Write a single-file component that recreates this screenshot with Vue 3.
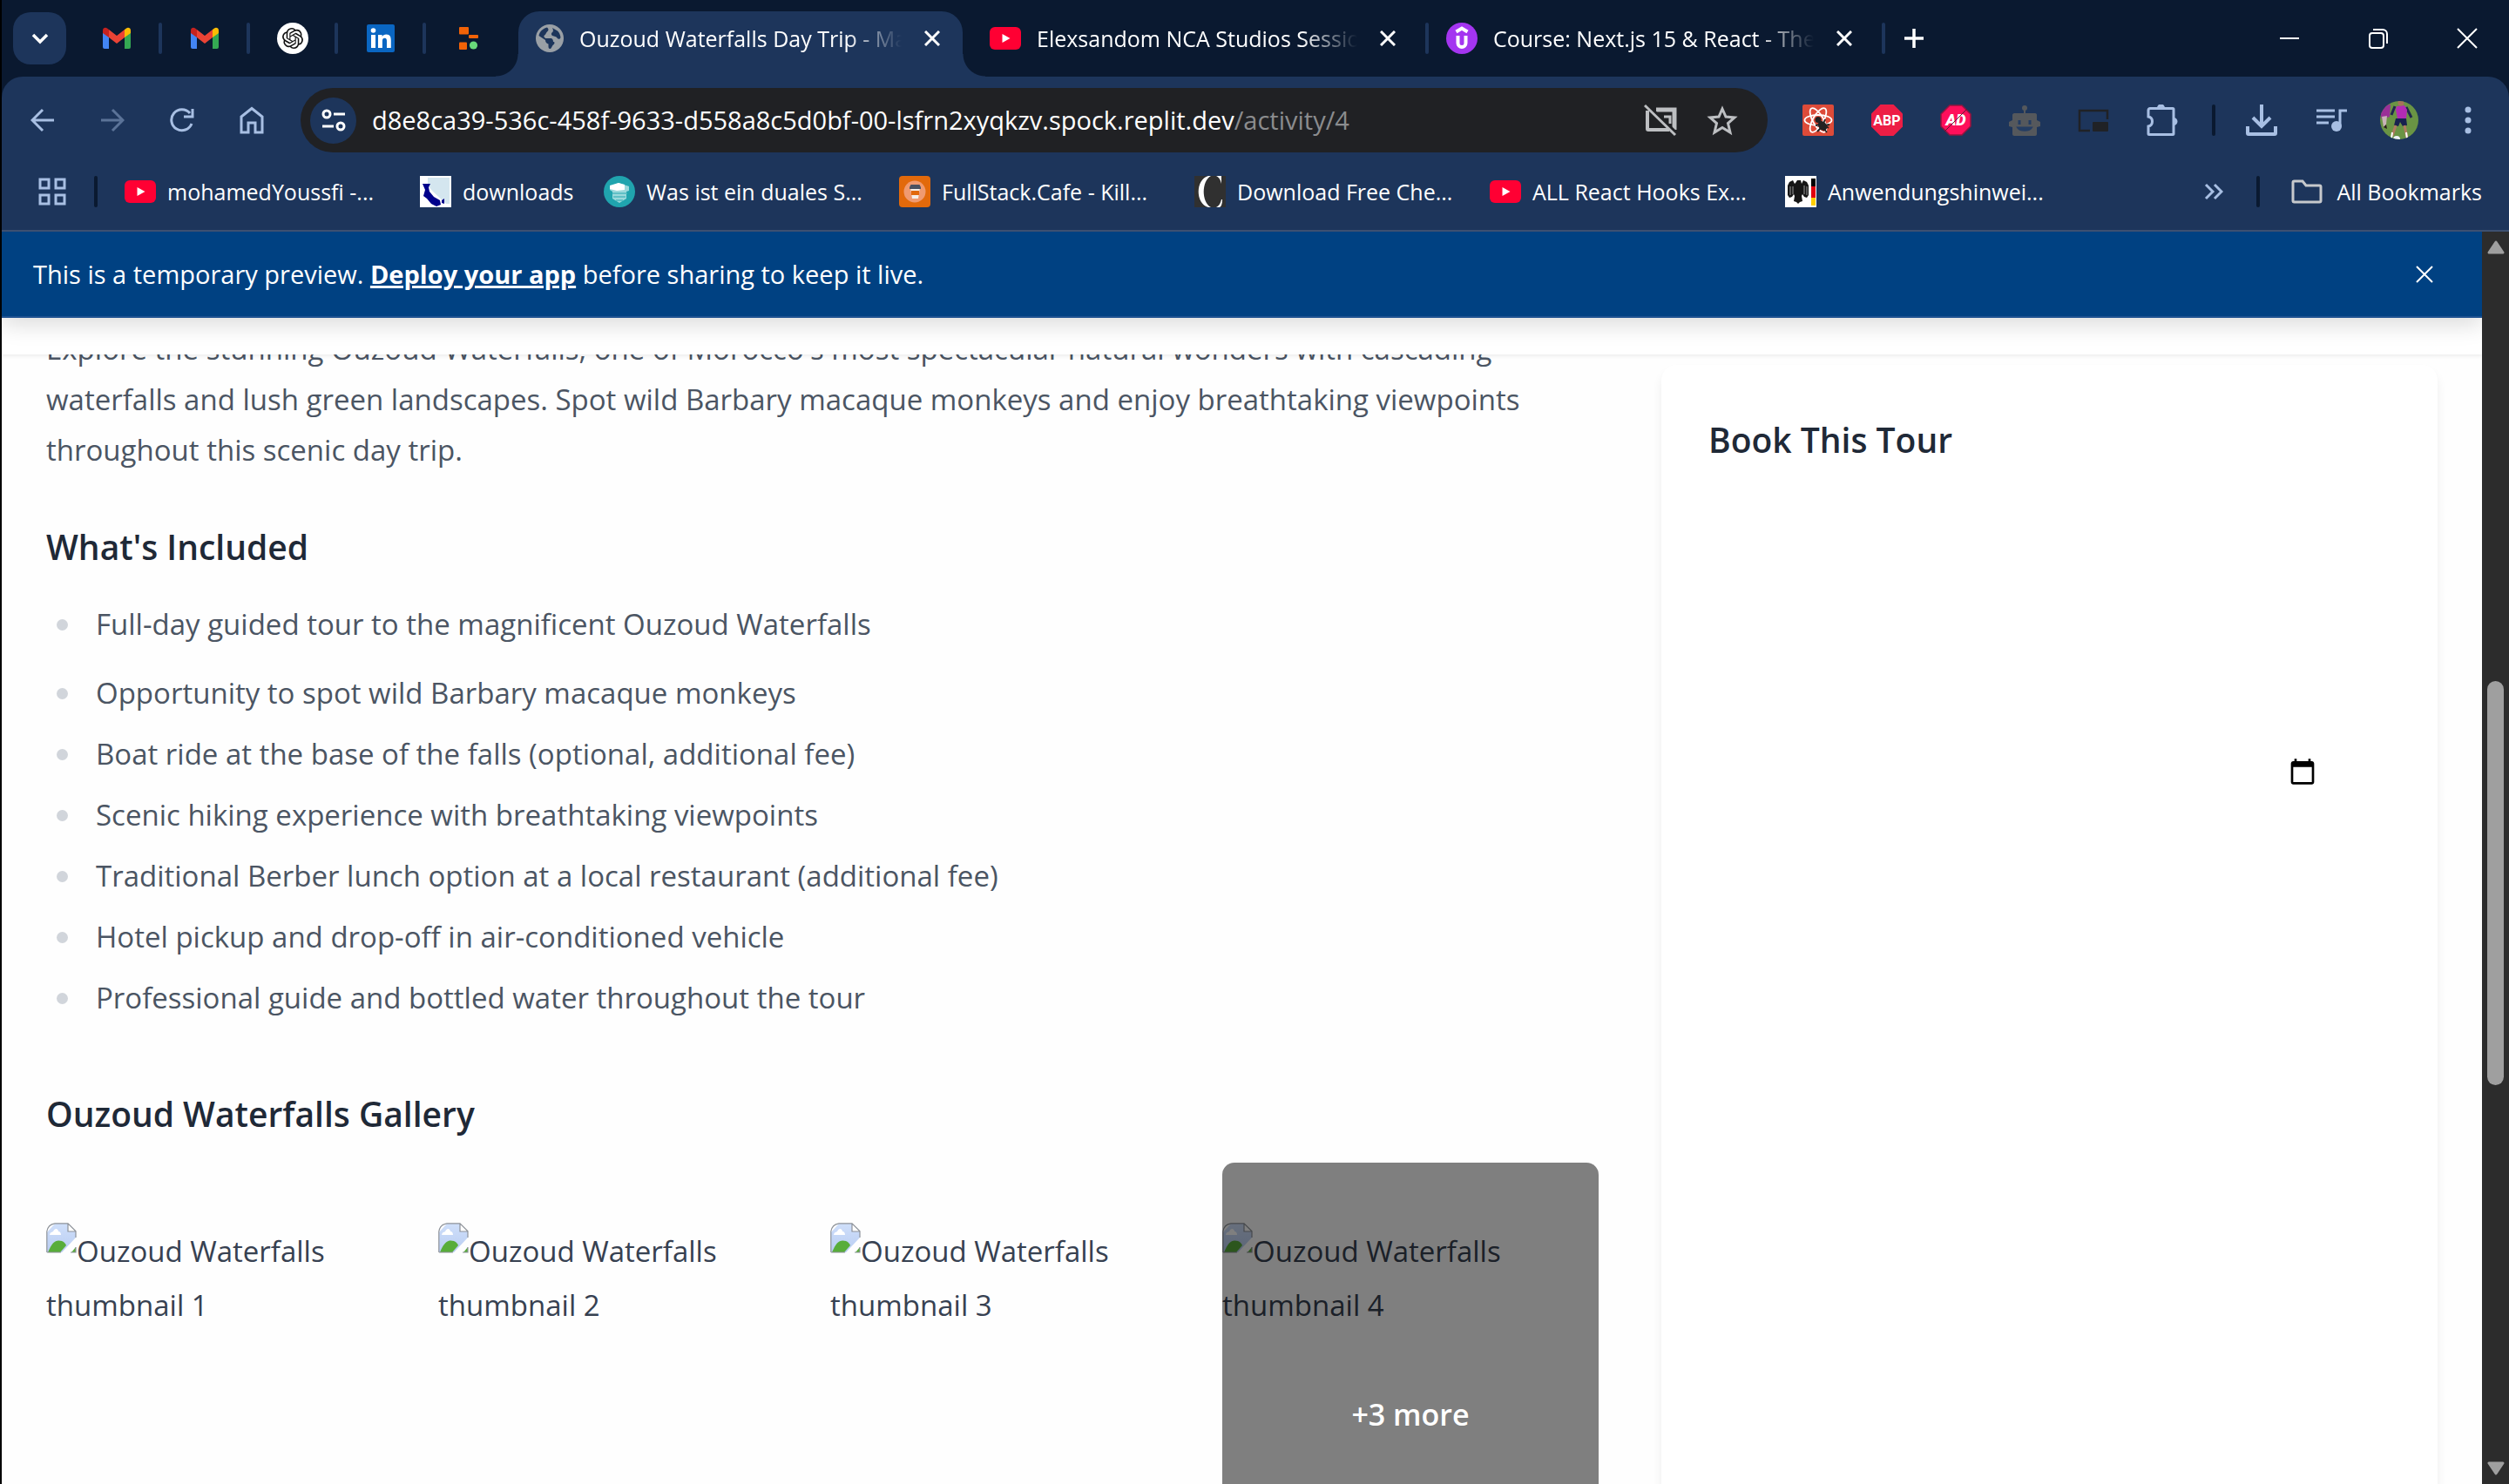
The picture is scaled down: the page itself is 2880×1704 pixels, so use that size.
<script setup>
const pinned = [
  { icon: 'gmail', label: 'Gmail', size: 32 },
  { icon: 'gmail', label: 'Gmail', size: 32 },
  { icon: 'gpt', label: 'ChatGPT', size: 36 },
  { icon: 'linkedin', label: 'LinkedIn', size: 32 },
  { icon: 'replit', label: 'Replit', size: 32 },
]
const tabs = [
  { icon: 'globe', title: 'Ouzoud Waterfalls Day Trip - Marrakech', active: true },
  { icon: 'youtube', title: 'Elexsandom NCA Studios Session', active: false },
  { icon: 'udemy', title: 'Course: Next.js 15 & React - The Complete', active: false },
]
const bookmarks = [
  { icon: 'youtube', title: 'mohamedYoussfi -...' },
  { icon: 'downloads', title: 'downloads' },
  { icon: 'dual', title: 'Was ist ein duales S...' },
  { icon: 'cafe', title: 'FullStack.Cafe - Kill...' },
  { icon: 'cheat', title: 'Download Free Che...' },
  { icon: 'youtube', title: 'ALL React Hooks Ex...' },
  { icon: 'eagle', title: 'Anwendungshinwei...' },
]
const extensions = [
  { icon: 'react', label: 'React Developer Tools' },
  { icon: 'abp', label: 'Adblock Plus', text: 'ABP' },
  { icon: 'ad', label: 'Ad blocker', text: 'AD' },
  { icon: 'robot', label: 'Robot' },
  { icon: 'pip', label: 'Picture in picture' },
  { icon: 'puzzle', label: 'Extensions' },
]
const included = [
  'Full-day guided tour to the magnificent Ouzoud Waterfalls',
  'Opportunity to spot wild Barbary macaque monkeys',
  'Boat ride at the base of the falls (optional, additional fee)',
  'Scenic hiking experience with breathtaking viewpoints',
  'Traditional Berber lunch option at a local restaurant (additional fee)',
  'Hotel pickup and drop-off in air-conditioned vehicle',
  'Professional guide and bottled water throughout the tour',
]
const thumbs = [1, 2, 3, 4]
</script>

<template>
  <div class="window">
    <svg class="sprite" aria-hidden="true">
      <symbol id="gmail" viewBox="0 0 32 32">
        <path d="M0 9v17a2 2 0 0 0 2 2h5V14z" fill="#4285f4" />
        <path d="M32 9v17a2 2 0 0 1-2 2h-5V14z" fill="#34a853" />
        <path d="M25 6v9l7-5V7c0-3-3-4-5-2.500z" fill="#fbbc04" />
        <path d="M0 10l7 5V6L5 4.500C3 3 0 4 0 7z" fill="#c5221f" />
        <path d="M7 6l9 7 9-7v9l-9 7-9-7z" fill="#ea4335" />
      </symbol>
      <symbol id="gpt" viewBox="0 0 36 36">
        <circle cx="18" cy="18" r="18" fill="#fff" />
        <path transform="translate(6 6)" fill="#111" d="M22.2819 9.8211a5.9847 5.9847 0 0 0-.5157-4.9108 6.0462 6.0462 0 0 0-6.5098-2.9A6.0651 6.0651 0 0 0 4.9807 4.1818a5.9847 5.9847 0 0 0-3.9977 2.9 6.0462 6.0462 0 0 0 .7427 7.0966 5.98 5.98 0 0 0 .511 4.9107 6.051 6.051 0 0 0 6.5146 2.9001A5.9847 5.9847 0 0 0 13.2599 24a6.0557 6.0557 0 0 0 5.7718-4.2058 5.9894 5.9894 0 0 0 3.9977-2.9001 6.0557 6.0557 0 0 0-.7475-7.0729zm-9.022 12.6081a4.4755 4.4755 0 0 1-2.8764-1.0408l.1419-.0804 4.7783-2.7582a.7948.7948 0 0 0 .3927-.6813v-6.7369l2.02 1.1686a.071.071 0 0 1 .038.052v5.5826a4.504 4.504 0 0 1-4.4945 4.4944zm-9.6607-4.1254a4.4708 4.4708 0 0 1-.5346-3.0137l.142.0852 4.783 2.7582a.7712.7712 0 0 0 .7806 0l5.8428-3.3685v2.3324a.0804.0804 0 0 1-.0332.0615L9.74 19.9502a4.4992 4.4992 0 0 1-6.1408-1.6464zM2.3408 7.8956a4.485 4.485 0 0 1 2.3655-1.9728V11.6a.7664.7664 0 0 0 .3879.6765l5.8144 3.3543-2.0201 1.1685a.0757.0757 0 0 1-.071 0l-4.8303-2.7865A4.504 4.504 0 0 1 2.3408 7.872zm16.5963 3.8558L13.1038 8.364 15.1192 7.2a.0757.0757 0 0 1 .071 0l4.8303 2.7913a4.4944 4.4944 0 0 1-.6765 8.1042v-5.6772a.79.79 0 0 0-.407-.667zm2.0107-3.0231l-.142-.0852-4.7735-2.7818a.7759.7759 0 0 0-.7854 0L9.409 9.2297V6.8974a.0662.0662 0 0 1 .0284-.0615l4.8303-2.7866a4.4992 4.4992 0 0 1 6.6802 4.66zM8.3065 12.863l-2.02-1.1638a.0804.0804 0 0 1-.038-.0567V6.0742a4.4992 4.4992 0 0 1 7.3757-3.4537l-.142.0805L8.704 5.459a.7948.7948 0 0 0-.3927.6813zm1.0976-2.3654l2.602-1.4998 2.6069 1.4998v2.9994l-2.5974 1.4997-2.6067-1.4997Z" />
      </symbol>
      <symbol id="linkedin" viewBox="0 0 32 32">
        <rect width="32" height="32" rx="2" fill="#0a66c2" />
        <circle cx="7.500" cy="7" r="2.800" fill="#fff" />
        <path d="M5 12h5v15H5zM13 12h4.600v2.100c.9-1.500 2.600-2.500 4.800-2.500 4.500 0 5.400 3 5.400 6.900V27H23v-7.500c0-1.900-.2-3.700-2.400-3.700s-2.700 1.700-2.700 3.600V27H13z" fill="#fff" />
      </symbol>
      <symbol id="replit" viewBox="0 0 32 32">
        <rect x="5" y="3" width="11" height="8.500" rx="1" fill="#f26207" />
        <rect x="16" y="12" width="11" height="4" rx="1" fill="#f26207" />
        <rect x="5" y="20.500" width="9" height="8.500" rx="1" fill="#f26207" />
        <circle cx="21.500" cy="24" r="4.600" fill="#68d97b" />
      </symbol>
      <symbol id="globe" viewBox="0 0 32 32">
        <circle cx="16" cy="16" r="16" fill="#9aa0a6" />
        <path d="M13 3.500c2 1.500 2 3.500 0 5-1.500 1-1 3-3 4-1.500.8 0 3.500 2 3.500h5c2.500 0 3 2.500 3 4 2 0 2 2 0 3.500-1.500 1.200-1.500 3-3 4.500-2 .5-2.500-1-2.500-3v-2.500c-2-.5-3.500-2-3.500-4.500L3.500 13C4.500 8 8.500 4.500 13 3.500zM19 4l6 3.500c2 2 3 4 3.500 7.500-1 3-3.500 1.500-4 .5-1-2-3-1.500-5.500-2.500-1.500-1-1.500-3 0-4 1.500-.8 1-3 0-5z" fill="#1d355b" />
      </symbol>
      <symbol id="youtube" viewBox="0 0 36 36">
        <rect y="5" width="36" height="26" rx="6" fill="#ff0033" />
        <path d="M14.500 13v10l9-5z" fill="#fff" />
      </symbol>
      <symbol id="udemy" viewBox="0 0 36 36">
        <circle cx="18" cy="18" r="18" fill="#a435f0" />
        <path d="M11.500 10.500L18 6.500l6.500 4M13.500 15v8.500c0 6 9 6 9 0V15" fill="none" stroke="#fff" stroke-width="4" />
      </symbol>
      <symbol id="downloads" viewBox="0 0 36 36">
        <rect width="36" height="36" fill="#fff" />
        <path d="M9 2h25v30h-4L14 17 9 11z" fill="#d4e6ef" />
        <path d="M3 9h9l-2 4 1 5 5 6 7 4 1 5-5 2-6-3-5-6-4-3 2-7zM25 28l3-2v6l-3-1z" fill="#00008b" />
      </symbol>
      <symbol id="dual" viewBox="0 0 36 36">
        <circle cx="18" cy="18" r="18" fill="#20a4ae" />
        <path d="M7 12l10-4 12 4v5l-3 1v8l-8 5-8-5v-8l-3-2z" fill="#9bd9dc" />
        <path d="M7 11l10-3 7 2v6l-9 1-8-2z" fill="#fff" />
        <path d="M10 20h17M11 24h14M14 28h8" stroke="#4db8bf" stroke-width="1.500" />
      </symbol>
      <symbol id="cafe" viewBox="0 0 36 36">
        <rect width="36" height="36" rx="4" fill="#e2690b" />
        <circle cx="18" cy="18" r="12.500" fill="#f09a70" />
        <path d="M13 13h11l-2 13h-7z" fill="#f5efe9" />
        <path d="M12 13l1.500-3h10l1.500 3v2H12z" fill="#4b5160" />
        <rect x="14" y="17" width="9" height="5" fill="#e2690b" />
      </symbol>
      <symbol id="cheat" viewBox="0 0 36 36">
        <rect width="36" height="36" fill="#303030" />
        <path d="M16 0C1 4 1 32 16 36h3C8 30 8 6 19 0zM25 0h6v9c-1-4-2-7-6-9zM25 36c4-2 5-5 6-9h1c0 5-1 8-3 9z" fill="#fff" />
      </symbol>
      <symbol id="eagle" viewBox="0 0 36 36">
        <rect width="36" height="36" fill="#fff" />
        <path d="M14 5h4l1 4 2-4 4 2 2 4v11l-2 3-3-1-2-3-1 2 1 6-3 1-2 2-2-2-3-1 1-6-1-2-2 3-3 1-2-3V11l2-4 4-2 2 4 1-1z" fill="#161616" />
        <path d="M6 12v10M9 12v9M22 11v10M25 12v10" stroke="#999" />
        <path d="M30 3h5v9h-5z" fill="#000" /><path d="M30 12h5v13h-5z" fill="#e3000f" /><path d="M30 25h5v9h-5z" fill="#ffce00" />
      </symbol>
      <symbol id="react" viewBox="0 0 36 36">
        <rect width="36" height="36" rx="2" fill="#dd4b39" />
        <g fill="none" stroke="#fff" stroke-width="1.800">
          <ellipse cx="18" cy="18" rx="15.500" ry="6" />
          <ellipse cx="18" cy="18" rx="15.500" ry="6" transform="rotate(60 18 18)" />
          <ellipse cx="18" cy="18" rx="15.500" ry="6" transform="rotate(120 18 18)" />
        </g>
        <circle cx="18" cy="17.500" r="3.500" fill="#222" />
        <ellipse cx="23" cy="24.500" rx="4.500" ry="6" transform="rotate(-40 23 24.500)" fill="#222" />
        <path d="M15 24l6-1M17 31l5-5M26 17l-2 5M25 24l6-1M24 27l4 5M20 20l10 7" stroke="#222" stroke-width="1.800" />
      </symbol>
      <symbol id="abp" viewBox="0 0 36 36">
        <path d="M10.500 0h15L36 10.500v15L25.500 36h-15L0 25.500v-15z" fill="#ed1e45" />
      </symbol>
      <symbol id="ad" viewBox="0 0 36 36">
        <path d="M11 1h14l10 10v14L25 35H11L1 25V11z" fill="#ff0f5b" stroke="#93143f" stroke-width="1.500" />
      </symbol>
      <symbol id="robot" viewBox="0 0 36 36">
        <path d="M17 6h2v4h11c1.500 0 2 1 2 2v6l4 2v5l-4 1v8c0 1-1 2-2 2H6c-1 0-2-1-2-2v-8l-4-1v-5l4-2v-6c0-1 1-2 2-2h11z" fill="#55585c" />
        <circle cx="18" cy="4" r="3" fill="#55585c" />
        <path d="M12 18v5M24 18v5M11 27c2 3 12 3 14 0z" stroke="#243d63" stroke-width="3" fill="#243d63" />
      </symbol>
      <symbol id="pip" viewBox="0 0 36 36">
        <path d="M14 30H2V7h32v10" fill="none" stroke="#202226" stroke-width="2.500" />
        <rect x="17" y="20" width="18" height="11" rx="1" fill="#202226" />
      </symbol>
      <symbol id="puzzle" viewBox="0 0 36 36">
        <path d="M4 4.500h26a1 1 0 0 1 1 1v28a1 1 0 0 1-1 1H3a1 1 0 0 1-1-1V25c6-1 6-10 0-11V6.500a2 2 0 0 1 2-2z" fill="none" stroke="#a8bfe3" stroke-width="3" />
        <path d="M12 4a4.500 4.500 0 0 1 9 0zM31 15a4.500 4.500 0 0 1 0 9z" fill="#a8bfe3" />
      </symbol>
      <linearGradient id="sky" x1="0" y1="0" x2="0" y2="1">
        <stop offset="0" stop-color="#cfdffa" /><stop offset="1" stop-color="#b9cdf2" />
      </linearGradient>
      <symbol id="broken" viewBox="0 0 35 35">
        <path d="M10 1h15l9 9v7L18 34H1V11z" fill="url(#sky)" />
        <path d="M29 34l5-6v6z" fill="#58ad3a" />
        <path d="M2 34c5-12 9-15 16-13 3 1 4 3 5 5l-7 8z" fill="#58ad3a" />
        <path d="M4 14c1-4 3-3 4-4 2-5 6-3 6 0 2 0 3 2 3 4z" fill="#fff" />
        <path d="M25 1v9h9z" fill="#fff" />
        <path d="M.800 34V10Q2 2 10 .800h15l9 9V17M25 1v9h9M34 28v6h-6M1 34h16" fill="none" stroke="#8d9299" stroke-width="1.200" />
      </symbol>
    </svg>

    <header class="tabstrip">
      <button class="tab-search" aria-label="Search tabs">
        <svg width="20" height="20" viewBox="0 0 20 20"><path d="M2 6l8 8 8-8" fill="none" stroke="#fff" stroke-width="3.500" /></svg>
      </button>
      <div class="pinned">
        <button v-for="(p, i) in pinned" :key="i" class="pin" :aria-label="p.label">
          <svg :width="p.size" :height="p.size"><use :href="'#' + p.icon" /></svg>
        </button>
      </div>
      <div v-for="t in tabs" :key="t.title" class="tab" :class="{ active: t.active }">
        <svg class="tab-icon"><use :href="'#' + t.icon" /></svg>
        <span class="tab-title">{{ t.title }}</span>
        <button class="plain" aria-label="Close tab">
          <svg width="18" height="18" viewBox="0 0 18 18"><path d="M1 1l16 16M17 1L1 17" stroke="#fff" stroke-width="3" /></svg>
        </button>
      </div>
      <button class="plain new-tab" aria-label="New tab">
        <svg width="22" height="22" viewBox="0 0 22 22"><path d="M11 0v22M0 11h22" stroke="#fff" stroke-width="3.500" /></svg>
      </button>
      <div class="caption">
        <button class="plain" aria-label="Minimize"><svg width="24" height="24" viewBox="0 0 24 24"><path d="M1 12h22" stroke="#fff" stroke-width="2" /></svg></button>
        <button class="plain" aria-label="Restore">
          <svg width="24" height="24" viewBox="0 0 24 24" fill="none" stroke="#fff" stroke-width="2"><rect x="2" y="6" width="16" height="17" rx="3" /><path d="M6 2h11a5 5 0 0 1 5 5v11" /></svg>
        </button>
        <button class="plain" aria-label="Close"><svg width="24" height="24" viewBox="0 0 24 24"><path d="M1 1l22 22M23 1L1 23" stroke="#fff" stroke-width="2" /></svg></button>
      </div>
    </header>

    <div class="chrome">
      <nav class="toolbar">
        <div class="nav">
          <button class="plain" aria-label="Back"><svg viewBox="0 0 28 28"><path d="M27 14H3M14 2L2 14l12 12" /></svg></button>
          <button class="plain dim" aria-label="Forward"><svg viewBox="0 0 28 28"><path d="M1 14h24M14 2l12 12-12 12" /></svg></button>
          <button class="plain" aria-label="Reload"><svg viewBox="0 0 28 28"><path d="M25 18A12 12 0 1 1 23 6M26 1v9h-10" /></svg></button>
          <button class="plain" aria-label="Home"><svg class="home" viewBox="0 0 28 32"><path d="M2 12L14 2.500 26 12v18h-8V19h-8v11H2z" /></svg></button>
        </div>
        <div class="omnibox">
          <button class="site" aria-label="View site information">
            <svg width="28" height="26" viewBox="0 0 28 26" fill="none" stroke="#fff" stroke-width="3"><circle cx="6" cy="6" r="4" /><circle cx="22" cy="20" r="4" /><path d="M14 6h13M1 20h13" /></svg>
          </button>
          <label class="address">
            <input type="text" aria-label="Address" value="d8e8ca39-536c-458f-9633-d558a8c5d0bf-00-lsfrn2xyqkzv.spock.replit.dev"><span>/activity/4</span>
          </label>
          <button class="plain" aria-label="Casting blocked">
            <svg width="38" height="38" viewBox="0 0 38 38" fill="none" stroke="#bdbfc2" stroke-width="4">
              <path d="M4 8v21a1 1 0 0 0 1 1h24" /><path d="M14 7h21v23" stroke-width="5" /><path d="M23 15h7v8" stroke-width="3" />
              <path d="M4 1l34 33" stroke="#202124" stroke-width="3" /><path d="M1 2l35 34" stroke-width="3" />
            </svg>
          </button>
          <button class="plain star" aria-label="Bookmark this tab">
            <svg width="36" height="36" viewBox="0 0 36 36" fill="none" stroke="#bdbfc2" stroke-width="3"><path d="M18 5l4 9 10 1-7.500 6.500L27 32l-9-5.500L9 32l2.500-10.500L4 15l10-1z" /></svg>
          </button>
        </div>
        <div class="extensions">
          <button v-for="e in extensions" :key="e.icon" class="plain" :aria-label="e.label">
            <svg width="36" height="36" viewBox="0 0 36 36">
              <use :href="'#' + e.icon" />
              <text v-if="e.text" x="18" y="24" text-anchor="middle" class="badge" :class="e.icon">{{ e.text }}</text>
              <path v-if="e.icon === 'ad'" d="M5 31L31 5" stroke="#5a1a35" stroke-width="1" />
            </svg>
          </button>
        </div>
        <i class="rule"></i>
        <div class="tools">
          <button class="plain" aria-label="Downloads">
            <svg width="36" height="36" viewBox="0 0 36 36" fill="none" stroke="#a8bfe3" stroke-width="4"><path d="M18 0v25M8 15l10 10 10-10M2 25v8a1 1 0 0 0 1 1h30a1 1 0 0 0 1-1v-8" /></svg>
          </button>
          <button class="plain" aria-label="Media controls">
            <svg width="36" height="36" viewBox="0 0 36 36" fill="none" stroke="#a8bfe3" stroke-width="3"><path d="M1 7h21M1 14h21M1 21h14M36 7h-8v18" /><circle cx="24" cy="25" r="6" fill="#a8bfe3" stroke="none" /></svg>
          </button>
          <button class="plain" aria-label="Profile">
            <svg width="44" height="44" viewBox="0 0 44 44">
              <clipPath id="round"><circle cx="22" cy="22" r="22" /></clipPath>
              <g clip-path="url(#round)">
                <rect width="44" height="44" fill="#6a9444" />
                <path d="M5 5l7-1-1 14-9 3-2-8z" fill="#9a3098" /><path d="M2 18l6-1-1 10-3 3z" fill="#c9b3b8" /><path d="M4 30l3-3 1 5z" fill="#2a1b1b" />
                <path d="M17 6l-4 10M30 7l6 12" stroke="#20264f" stroke-width="3" />
                <path d="M19 6l9-1 3 5-1 11-10-1-2-10z" fill="#b32bb4" />
                <circle cx="24" cy="2" r="3.500" fill="#a5745a" />
                <path d="M18 20h12l1 8-5 1-3-5-2 5-5-1z" fill="#18224f" />
                <path d="M18 28l-4 12M28 28l3 14" stroke="#b07b5f" stroke-width="3" />
                <path d="M14 36l-1 7M30 36l1 7" stroke="#fff" stroke-width="2" />
                <circle cx="19" cy="44" r="4" fill="#eef2f7" />
              </g>
            </svg>
          </button>
          <button class="plain" aria-label="Menu"><svg width="8" height="32" viewBox="0 0 8 32" fill="#a8bfe3"><circle cx="4" cy="4" r="3.500" /><circle cx="4" cy="16" r="3.500" /><circle cx="4" cy="28" r="3.500" /></svg></button>
        </div>
      </nav>

      <div class="bookmarks">
        <button class="plain" aria-label="Apps">
          <svg width="32" height="32" viewBox="0 0 32 32" fill="none" stroke="#a8bfe3" stroke-width="3"><rect x="2" y="2" width="10" height="10" /><rect x="20" y="2" width="10" height="10" /><rect x="2" y="20" width="10" height="10" /><rect x="20" y="20" width="10" height="10" /></svg>
        </button>
        <i class="rule"></i>
        <div class="bookmark-list">
          <a v-for="b in bookmarks" :key="b.title" href="#" class="bookmark" :class="{ short: b.title === 'downloads' }">
            <svg width="36" height="36"><use :href="'#' + b.icon" /></svg><span>{{ b.title }}</span>
          </a>
        </div>
        <button class="plain more-marks" aria-label="More bookmarks"><svg width="22" height="20" viewBox="0 0 22 20"><path d="M2 2l8 8-8 8M12 2l8 8-8 8" fill="none" stroke="#a8bfe3" stroke-width="3" /></svg></button>
        <i class="rule"></i>
        <a href="#" class="bookmark all">
          <svg width="36" height="28" viewBox="0 0 36 28"><path d="M2 3.500a1.500 1.500 0 0 1 1.500-1.500H13l4 5h15.500A1.500 1.500 0 0 1 34 8.500v16a1.500 1.500 0 0 1-1.500 1.500h-29A1.500 1.500 0 0 1 2 24.500z" fill="none" stroke="#c7c9cc" stroke-width="3" /></svg><span>All Bookmarks</span>
        </a>
      </div>
    </div>

    <div class="view">
      <div class="page">
        <div class="banner">
          <p>This is a temporary preview. <a href="#">Deploy your app</a> before sharing to keep it live.</p>
          <button class="plain" aria-label="Dismiss"><svg width="20" height="20" viewBox="0 0 20 20"><path d="M1 1l18 18M19 1L1 19" stroke="#fff" stroke-width="2" /></svg></button>
        </div>
        <div class="site-header"></div>
        <main class="content">
          <article>
            <p class="lead">Explore the stunning Ouzoud Waterfalls, one of Morocco's most spectacular natural wonders with cascading<br>waterfalls and lush green landscapes. Spot wild Barbary macaque monkeys and enjoy breathtaking viewpoints<br>throughout this scenic day trip.</p>
            <h2>What's Included</h2>
            <ul>
              <li v-for="item in included" :key="item">{{ item }}</li>
            </ul>
            <h2>Ouzoud Waterfalls Gallery</h2>
            <div class="gallery">
              <a v-for="n in thumbs" :key="n" href="#" class="thumb">
                <span class="alt"><svg width="35" height="35"><use href="#broken" /></svg>Ouzoud Waterfalls thumbnail {{ n }}</span>
                <span v-if="n === 4" class="overlay">+3 more</span>
              </a>
            </div>
          </article>
          <aside class="card">
            <h3>Book This Tour</h3>
            <input type="date" class="date" aria-label="Date">
          </aside>
        </main>
      </div>
      <div class="scrollbar">
        <svg width="22" height="16" viewBox="0 0 22 16"><path d="M11 2l8 12H3z" fill="#9f9f9f" stroke="#9f9f9f" stroke-width="3" stroke-linejoin="round" /></svg>
        <div class="track"><i class="thumb-bar"></i></div>
        <svg width="22" height="16" viewBox="0 0 22 16"><path d="M11 14L3 2h16z" fill="#9f9f9f" stroke="#9f9f9f" stroke-width="3" stroke-linejoin="round" /></svg>
      </div>
    </div>
  </div>
</template>

<style>
body { margin: 0; background: #fff; }
</style>

<style scoped>
.window {
  box-sizing: border-box;
  display: flex;
  flex-direction: column;
  height: 100vh;
  overflow: hidden;
  border-left: 2px solid #000;
  background: #0a1930;
  font-family: "Open Sans", "Noto Sans", sans-serif;
  font-size: 25px;
  color: #fff;
}
.sprite { position: absolute; width: 0; height: 0; }
svg { display: block; flex: none; }
button { font: inherit; color: inherit; border: 0; padding: 0; cursor: pointer; }
.plain { display: flex; align-items: center; justify-content: center; background: none; }
.badge { font: 700 16px Roboto, sans-serif; fill: #fff; }
.badge.ad { font-size: 18px; font-weight: 900; font-style: italic; }

.tabstrip { display: flex; align-items: center; height: 88px; padding-left: 13px; }
.tab-search { display: flex; align-items: center; justify-content: center; width: 61px; height: 60px; border-radius: 20px; background: #1d355b; }
.pinned { display: flex; margin: 0 7px; }
.pin { display: flex; align-items: center; justify-content: center; width: 101px; height: 36px; background: none; position: relative; }
.pin:not(:last-child)::after, .tab:not(.active)::after {
  content: ""; position: absolute; right: -2px; width: 4px; height: 36px; border-radius: 2px; background: #1d355b;
}
.tab { box-sizing: border-box; position: relative; display: flex; align-items: center; flex: 0 1 524px; min-width: 0; height: 88px; padding: 0 36px 0 22px; }
.tab-icon { width: 36px; height: 36px; }
.tab-title { flex: 1; margin: 0 26px 0 18px; overflow: hidden; white-space: nowrap; line-height: 36px; mask-image: linear-gradient(90deg, #000 calc(100% - 64px), transparent); }
.tab.active { flex-basis: 510px; align-self: flex-end; height: 75px; margin-right: 9px; padding: 0 26px 13px 20px; border-radius: 24px 24px 0 0; background: #1d355b; }
.tab.active .tab-icon { width: 32px; height: 32px; }
.tab.active::before, .tab.active::after { content: ""; position: absolute; bottom: 0; width: 26px; height: 26px; }
.tab.active::before { left: -26px; background: radial-gradient(circle at 0 0, transparent 25px, #1d355b 26px); }
.tab.active::after { right: -26px; background: radial-gradient(circle at 100% 0, transparent 25px, #1d355b 26px); }
.new-tab { margin-left: 24px; }
.caption { display: flex; gap: 78px; margin-left: auto; padding-right: 36px; }

.chrome { background: #1d355b; border-radius: 24px 24px 0 0; border-bottom: 2px solid #3d5071; }
.toolbar { display: flex; align-items: center; height: 100px; padding-right: 43px; }
.nav { display: flex; gap: 52px; padding-left: 33px; }
.nav svg { width: 28px; height: 28px; fill: none; stroke: #a8bfe3; stroke-width: 3; }
.nav svg.home { height: 32px; }
.nav .dim { opacity: 0.45; }
.omnibox { box-sizing: border-box; display: flex; align-items: center; flex: 1; height: 74px; margin-left: 42px; padding: 0 34px 0 11px; border-radius: 37px; background: #202124; }
.site { display: flex; align-items: center; justify-content: center; width: 53px; height: 53px; border-radius: 50%; background: #1d355b; }
.address { display: flex; align-items: center; flex: 1; margin-left: 18px; font-size: 29px; line-height: 40px; color: #8b8c8e; white-space: nowrap; }
.address input { field-sizing: content; height: 40px; padding: 0; border: 0; outline: 0; background: none; font: inherit; color: #fff; }
.star { margin-left: 34px; }
.extensions { display: flex; gap: 43px; margin-left: 40px; }
.rule { width: 4px; height: 36px; border-radius: 2px; background: #0a1930; }
.toolbar .rule { margin: 0 35px 0 39px; }
.tools { display: flex; align-items: center; gap: 44px; }
.tools > :nth-child(3) { margin-left: -6px; }
.tools > :nth-child(4) { margin-left: 9px; }

.bookmarks { display: flex; align-items: center; height: 64px; padding: 0 31px 12px 42px; }
.bookmarks > .rule { margin-left: 32px; }
.bookmark-list { display: flex; gap: 40px; margin-left: 31px; }
.bookmark { display: flex; align-items: center; gap: 13px; width: 299px; color: #fff; text-decoration: none; white-space: nowrap; }
.bookmark.short { width: 171px; }
.bookmark.all { width: auto; margin-left: 36px; gap: 16px; }
.more-marks { margin-left: auto; }
.bookmarks > .more-marks + .rule { margin-left: 38px; }

.view { display: flex; flex: 1; min-height: 0; }
.page { flex: 1; min-width: 0; overflow: hidden; background: #fefefe; color: #4b5563; }
.banner { position: relative; z-index: 2; box-sizing: border-box; display: flex; align-items: center; justify-content: space-between; height: 99px; padding: 0 56px 0 36px; background: #004182; border-bottom: 2px solid #1f5291; box-shadow: 0 8px 24px rgba(0, 0, 0, 0.14); color: #fff; font-size: 29px; }
.banner p { margin: 0; }
.banner a { color: #fff; font-weight: 700; text-decoration-thickness: 3px; }
.site-header { position: relative; z-index: 1; height: 42px; background: #fff; box-shadow: 0 2px 4px rgba(0, 0, 0, 0.07); }
.content { display: grid; grid-template-columns: 2fr 1fr; gap: 72px; margin-top: -35px; padding: 0 51px; }
article { min-width: 0; }
.lead { margin: 0; font-size: 33px; line-height: 58px; white-space: nowrap; }
h2, h3 { margin: 0; font-size: 39px; line-height: 64px; font-weight: 600; color: #1f2937; }
h2 { margin-top: 50px; }
ul { margin: 28px 0 0; padding: 0; list-style: none; font-size: 33px; line-height: 58px; }
li { display: flex; align-items: center; gap: 32px; margin: 0 0 12px 12px; }
li:first-child { margin-bottom: 21px; }
li::before { content: ""; width: 13px; height: 13px; border-radius: 50%; background: #d1d5db; }
ul + h2 { margin-top: 72px; }
.gallery { display: grid; grid-template-columns: repeat(4, 1fr); gap: 18px; margin-top: 24px; }
.thumb { position: relative; height: 578px; padding-top: 71px; box-sizing: border-box; color: #374151; text-decoration: none; font-size: 33px; line-height: 62px; }
.alt { display: block; max-width: 360px; }
.alt svg { display: inline-block; vertical-align: 10px; margin-top: -20px; }
.overlay { position: absolute; inset: 0; display: flex; align-items: center; justify-content: center; border-radius: 14px; background: rgba(0, 0, 0, 0.5); color: #fff; font-size: 34px; font-weight: 600; }
.card { margin-top: 47px; padding: 54px; border-radius: 18px; background: #fff; box-shadow: 0 8px 12px rgba(0, 0, 0, 0.07); }
.date { display: block; box-sizing: border-box; width: 100%; height: 84px; margin-top: 308px; padding: 0 84px 0 24px; border: 0; outline: 0; background: none; font: 33px "Open Sans", sans-serif; color: transparent; }
.date::-webkit-calendar-picker-indicator { width: 34px; height: 34px; padding: 0; }

.scrollbar { display: flex; flex-direction: column; align-items: center; justify-content: space-between; width: 31px; padding: 10px 0; box-sizing: border-box; background: #2c2c2c; }
.track { flex: 1; width: 19px; padding-top: 490px; }
.thumb-bar { display: block; width: 19px; height: 464px; border-radius: 10px; background: #9f9f9f; }
</style>
